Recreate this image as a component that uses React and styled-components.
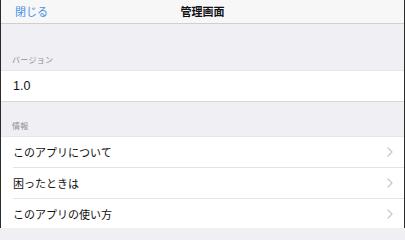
import styled, { createGlobalStyle } from 'styled-components';

const GlobalStyle = createGlobalStyle`
    html, body {
        margin: 0;
        padding: 0;
        background: #efeff4;
    }
    body {
        font-family: 'Noto Sans CJK JP', 'Liberation Sans', sans-serif;
        -webkit-font-smoothing: antialiased;
    }
`;

const infoItems = ['このアプリについて', '困ったときは', 'このアプリの使い方'];

const Chevron = () => (
    <svg width="6" height="10" viewBox="0 0 6 10" fill="none">
        <path d="M1 1l4 4-4 4" stroke="#c7c7cc" strokeWidth="1.2" strokeLinecap="round" strokeLinejoin="round" />
    </svg>
);

const App = () => {
    return (
        <Screen>
            <GlobalStyle />
            <NavBar>
                <NavButton>閉じる</NavButton>
                <NavTitle>管理画面</NavTitle>
                <span />
            </NavBar>

            <SectionHeader $height={46}>バージョン</SectionHeader>
            <Group>
                <Cell>
                    <Version>1.0</Version>
                </Cell>
            </Group>

            <SectionHeader $height={34}>情報</SectionHeader>
            <Group>
                {infoItems.map((label, index) => (
                    <Cell key={index} $divider={index > 0}>
                        <CellLabel>{label}</CellLabel>
                        <Chevron />
                    </Cell>
                ))}
            </Group>
        </Screen>
    );
};

export default App;

const Screen = styled.div`
    width: 405px;
    height: 228px;
    box-sizing: border-box;
    overflow: hidden;
    display: flex;
    flex-direction: column;
    background: #efeff4;
    border-left: 1px solid #2b2b2b;
    border-right: 1px solid #2b2b2b;
`;

const NavBar = styled.div`
    height: 23px;
    flex-shrink: 0;
    display: grid;
    grid-template-columns: 1fr auto 1fr;
    align-items: center;
    padding: 0 14px;
    background: #f7f7f8;
    border-bottom: 1px solid #cfcfd3;
`;

const NavButton = styled.span`
    font-size: 11px;
    color: #4a8fe3;
    line-height: 1;
    padding-bottom: 1px;
`;

const NavTitle = styled.span`
    font-size: 11px;
    font-weight: 700;
    color: #111;
    line-height: 1;
    padding-bottom: 1px;
`;

const SectionHeader = styled.div`
    height: ${(p) => p.$height}px;
    flex-shrink: 0;
    box-sizing: border-box;
    display: flex;
    align-items: flex-end;
    padding: 0 11px 6px;
    font-size: 8px;
    line-height: 1;
    color: #8e8e93;
    letter-spacing: 0.3px;
`;

const Group = styled.div`
    background: #fff;
    border-top: 1px solid #e6e6ea;
    border-bottom: 1px solid #d8d8dc;
    flex-shrink: 0;
`;

const Cell = styled.div`
    height: 30px;
    display: flex;
    align-items: center;
    justify-content: space-between;
    padding-right: 11px;
    margin-left: 12px;
    border-top: ${(p) => (p.$divider ? '1px solid #e3e3e6' : 'none')};
`;

const CellLabel = styled.span`
    font-size: 11px;
    color: #111;
    line-height: 1;
`;

const Version = styled.span`
    font-family: 'Liberation Sans', 'Noto Sans CJK JP', sans-serif;
    font-size: 12.5px;
    color: #111;
    line-height: 1;
`;
